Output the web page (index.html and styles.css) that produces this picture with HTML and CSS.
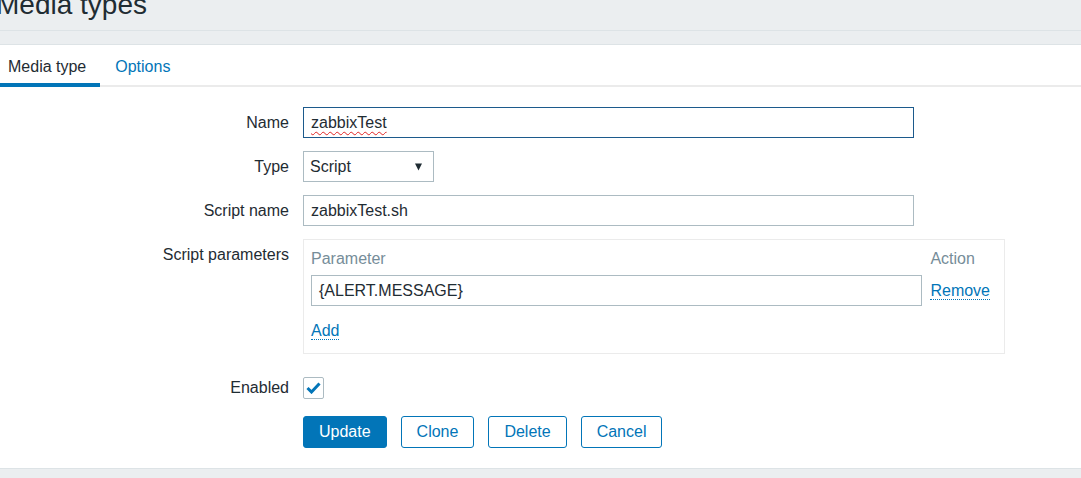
FILE: index.html
```html
<!DOCTYPE html>
<html lang="en">
<head>
<meta charset="utf-8">
<title>Media types</title>
<link rel="stylesheet" href="styles.css">
</head>
<body>
<header class="page-header">
  <h1 class="page-title">Media types</h1>
</header>
<div class="header-gap"></div>
<main class="panel">
  <nav class="tabs">
    <a class="tab tab-active">Media type</a>
    <a class="tab">Options</a>
  </nav>
  <form class="form">
    <div class="row">
      <label class="label">Name</label>
      <div class="field">
        <div class="textbox textbox-wide textbox-focus"><span class="misspelled">zabbixTest</span></div>
      </div>
    </div>
    <div class="row">
      <label class="label">Type</label>
      <div class="field">
        <div class="select">
          <span>Script</span>
          <svg class="select-arrow" width="7" height="8" viewBox="0 0 7 8"><polygon points="0,0.5 7,0.5 3.5,7.5" fill="#1f2c33"/></svg>
        </div>
      </div>
    </div>
    <div class="row">
      <label class="label">Script name</label>
      <div class="field">
        <div class="textbox textbox-wide">zabbixTest.sh</div>
      </div>
    </div>
    <div class="row">
      <label class="label">Script parameters</label>
      <div class="field">
        <div class="params">
          <div class="params-head">Parameter</div>
          <div class="params-head">Action</div>
          <div class="textbox">{ALERT.MESSAGE}</div>
          <div class="params-action"><span class="link">Remove</span></div>
          <div class="params-add"><span class="link">Add</span></div>
        </div>
      </div>
    </div>
    <div class="row row-enabled">
      <label class="label">Enabled</label>
      <div class="field field-center">
        <span class="checkbox">
          <svg width="15" height="12" viewBox="0 0 15 12"><path d="M1.5 6 L5.5 10 L13.5 1.5" fill="none" stroke="#0275b8" stroke-width="3"/></svg>
        </span>
      </div>
    </div>
    <div class="row row-buttons">
      <div class="label"></div>
      <div class="field buttons">
        <button type="button" class="btn btn-primary">Update</button>
        <button type="button" class="btn">Clone</button>
        <button type="button" class="btn">Delete</button>
        <button type="button" class="btn">Cancel</button>
      </div>
    </div>
  </form>
</main>
</body>
</html>
```

FILE: styles.css
```css
* { box-sizing: border-box; }
html, body {
  margin: 0;
  padding: 0;
}
body {
  background: #ebeef0;
  font-family: "Liberation Sans", Arial, sans-serif;
  font-size: 16px;
  color: #1f2c33;
  height: 478px;
  overflow: hidden;
}
.page-header {
  display: flow-root;
  height: 31px;
  border-bottom: 1px solid #dde3e6;
  overflow: hidden;
}
.page-title {
  margin: -9px 0 0 -4px;
  font-size: 28px;
  line-height: 28px;
  font-weight: normal;
  color: #1f2c33;
}
.header-gap {
  height: 13px;
}
.panel {
  background: #ffffff;
  border-top: 1px solid #dde3e6;
  border-bottom: 1px solid #dde3e6;
}
.tabs {
  display: flex;
  border-bottom: 2px solid #ebebeb;
  height: 42px;
}
.tab {
  padding: 5px 15px 0;
  line-height: 33px;
  height: 42px;
  margin-bottom: -2px;
  color: #0275b8;
  border-bottom: 4px solid transparent;
}
.tab:first-child {
  margin-left: -7px;
  padding-right: 14px;
}
.tab-active {
  color: #1f2c33;
  border-bottom-color: #0275b8;
}
.form {
  display: flex;
  flex-direction: column;
  gap: 13px;
  padding: 20px 0 20px;
}
.row {
  display: flex;
  column-gap: 14px;
  align-items: flex-start;
}
.row-enabled {
  margin-top: 5px;
}
.label {
  width: 289px;
  flex: none;
  text-align: right;
  padding-top: 1px;
  line-height: 30px;
}
.field {
  flex: none;
  display: flex;
}
.field-center {
  height: 31px;
  align-items: center;
}
.textbox {
  height: 31px;
  border: 1px solid #acbbc2;
  padding: 1px 7px 0;
  line-height: 28px;
  color: #1f2c33;
  background: #fff;
  white-space: nowrap;
}
.textbox-wide {
  width: 611px;
}
.textbox-focus {
  border-color: #1c5a8c;
}
.misspelled {
  text-decoration: underline wavy #e02424;
  text-decoration-thickness: 1px;
  text-underline-offset: 3px;
  text-decoration-skip-ink: none;
}
.select {
  width: 131px;
  height: 31px;
  border: 1px solid #acbbc2;
  padding: 1px 11px 0 6px;
  display: flex;
  align-items: center;
  justify-content: space-between;
}
.select-arrow {
  display: block;
}
.params {
  width: 702px;
  border: 1px solid #ebebeb;
  padding: 9px 14px 13px 7px;
  display: grid;
  grid-template-columns: 1fr auto;
  column-gap: 8px;
  row-gap: 7px;
  align-items: center;
}
.params-head {
  color: #768d99;
  line-height: 19px;
}
.params-action {
  line-height: 19px;
}
.params-add {
  grid-column: 1 / span 2;
  padding-top: 8px;
  line-height: 19px;
}
.link {
  color: #0275b8;
  border-bottom: 1px dotted #0275b8;
  cursor: pointer;
}
.checkbox {
  width: 21px;
  height: 22px;
  border: 1px solid #acbbc2;
  border-radius: 2px;
  display: flex;
  align-items: center;
  justify-content: center;
}
.checkbox svg {
  display: block;
  margin-top: 1px;
}
.buttons {
  gap: 14px;
}
.btn {
  height: 32px;
  padding: 0 15px;
  border: 1px solid #0275b8;
  border-radius: 3px;
  background: #fff;
  color: #0275b8;
  font-family: "Liberation Sans", Arial, sans-serif;
  font-size: 16px;
  line-height: 30px;
}
.btn-primary {
  background: #0275b8;
  color: #fff;
}
```
